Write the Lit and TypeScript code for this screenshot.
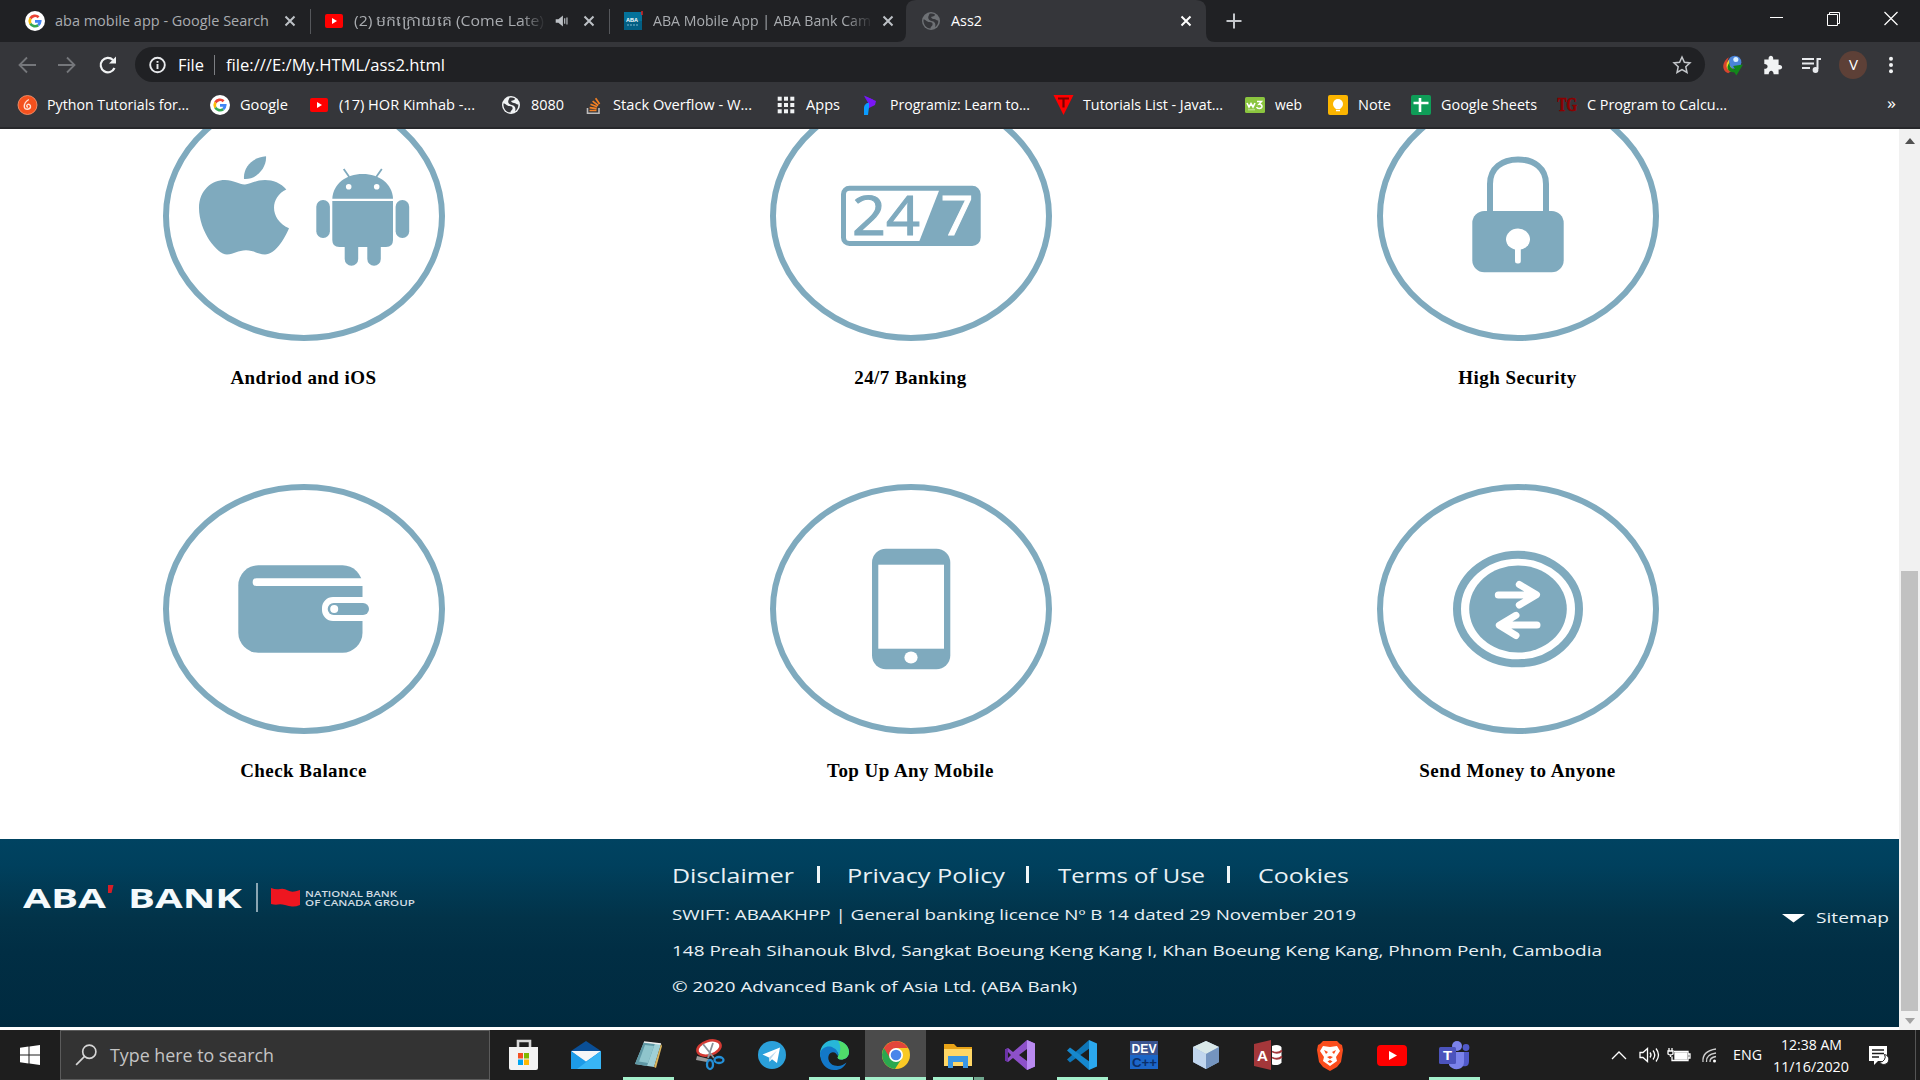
import { LitElement, html, svg, css } from "lit";
import { customElement } from "lit/decorators.js";

/* One line of text drawn at a known advance width. */
const fit = (text: string, width: number, size: number, cls = "", height = 24) => html`
  <svg class="fit ${cls}" width=${width} height=${height} viewBox="0 0 ${width} ${height}">
    <text x="0" y=${height / 2 + size * 0.36} font-size=${size} textLength=${width} lengthAdjust="spacingAndGlyphs">${text}</text>
  </svg>`;

const icon = (body: unknown, w = 20, h = w, box = "0 0 20 20") => html`
  <svg class="icon" width=${w} height=${h} viewBox=${box}>${body}</svg>`;

const googleG = svg`
  <circle cx="10" cy="10" r="10" fill="#fff"/>
  <g fill="none" stroke-width="2.700">
    <path d="M13.600 6.200A5.200 5.200 0 0 0 5.400 7.500" stroke="#ea4335"/>
    <path d="M5.400 7.500A5.400 5.400 0 0 0 5.400 12.600" stroke="#fbbc05"/>
    <path d="M5.400 12.600A5.200 5.200 0 0 0 13.200 14.100" stroke="#34a853"/>
    <path d="M13.200 14.100A5 5 0 0 0 15.200 10.300H10" stroke="#4285f4"/>
  </g>`;
const tube = svg`<rect x="1" y="3" width="18" height="14" rx="2" fill="#f00"/><path d="M8 7l5 3-5 3z" fill="#fff"/>`;
const globe = (c: string, land: string) => svg`
  <circle cx="10" cy="10" r="9" fill=${c}/>
  <path d="M2.500 8.500c2.500 0 3 2.500 6 2.500 2.500 0 3.500 1.300 3 3C11 15.500 9.500 15.500 9.500 17.500 5 17.500 2 13 2.500 8.500zM8.500 2.800c1.500-.6 4-.4 5.500.7 0 1.500-1.500 2-3.500 2.300C9.500 6.300 11 8 13 8c2 0 2.500 2 4.300 1.500.2 3-1.300 5.500-3.300 6.800 1-2.500.3-5.300-2.500-6C9 9.700 7 8.500 7.200 6.500 7.300 5 8 4.500 8.500 2.800z" fill=${land}/>`;
const cross = (c: string) => svg`<path d="M5.500 5.500l9 9M14.500 5.500l-9 9" stroke=${c} stroke-width="2"/>`;

const bookmarks = [
  { at: 17, text: "Python Tutorials for...", w: 142, art: svg`<circle cx="10.500" cy="10" r="9.500" fill="#f4511e" stroke="#ff9a72" stroke-width=".8"/><path d="M11.800 4.500C8.500 6.500 7 9 7.300 12c.5 3 5.500 3 6.200 0 .3-2.300-1.800-3.300-3.200-2.300-1.200 1-.5 2.600.8 2.300" fill="none" stroke="#ffe2d5" stroke-width="1.400"/>` },
  { at: 210, text: "Google", w: 48, art: googleG },
  { at: 309, text: "(17) HOR Kimhab -...", w: 136, art: tube },
  { at: 501, text: "8080", w: 33, art: globe("#f1f3f4", "#35363a") },
  { at: 583, text: "Stack Overflow - W...", w: 139, art: svg`<path d="M4.500 13v5.200h11.500v-5.200" fill="none" stroke="#bcbbbb" stroke-width="1.600"/><g stroke="#f48024" stroke-width="1.700"><path d="M6.500 15.500h7M6.600 12.600l7 1M7.500 9.300l6.600 2.500M9.600 6.200l5.600 4.300M12.600 3.200l4 5.800"/></g>` },
  { at: 776, text: "Apps", w: 34, art: svg`<g fill="#f1f3f4">${[0, 1, 2].map(r => [0, 1, 2].map(c => svg`<rect x=${1.7 + c * 6.3} y=${1.7 + r * 6.3} width="4" height="4"/>`))}</g>` },
  { at: 860, text: "Programiz: Learn to...", w: 140, art: svg`<path d="M4 1l9 3.500-4.500 4z" fill="#6a1cf0"/><path d="M4 .5L16 6l-1 4-9 4.500V9l4-2.500z" fill="#7b16f5"/><path d="M4 13c0-3 2-5 5-5v4l-1 8H4z" fill="#0a9cff"/>` },
  { at: 1053, text: "Tutorials List - Javat...", w: 140, art: svg`<path d="M.5 0h20l-10 20z" fill="#f00"/><path d="M5 3.500h11M10.500 3.500v9" stroke="#7b0000" stroke-width="2.200"/>` },
  { at: 1245, text: "web", w: 27, art: svg`<rect y="2" width="20" height="16" rx="1.500" fill="#8bc53f"/><path d="M2 8l2 4 2-3.500 2 3.500 2-4" fill="none" stroke="#fff" stroke-width="1.600"/><path d="M12 6.500h4.500L14 9.300c4-.5 4 4.500 0 4.200-1.300 0-2-.6-2.400-1.500" fill="none" stroke="#fff" stroke-width="1.500"/><path d="M3 14.800h7" stroke="#d7efb8" stroke-width=".8"/>` },
  { at: 1328, text: "Note", w: 33, art: svg`<rect width="20" height="20" rx="2" fill="#fbb500"/><circle cx="10" cy="9" r="5" fill="#fff"/><path d="M7.500 12h5v2h-5zM8 14.800h4v1.400H8z" fill="#fff"/>` },
  { at: 1411, text: "Google Sheets", w: 96, art: svg`<rect width="20" height="20" rx="2" fill="#0f9d58"/><path d="M9 3v14M2.500 8h15" stroke="#fff" stroke-width="2.600"/>` },
  { at: 1557, text: "C Program to Calcu...", w: 140, art: svg`<text class="tg" x="0.500" y="16.300" font-size="18" textLength="19.500" lengthAdjust="spacingAndGlyphs">TG</text>` },
];

const ring = (body: unknown) => html`
  <svg class="ring" width="282" height="250" viewBox="0 0 282 250">
    <ellipse cx="141" cy="125" rx="138" ry="122" fill="none" stroke="#7faabe" stroke-width="6"/>
    <g fill="#7faabe">${body}</g>
  </svg>`;

const features = [
  { label: "Andriod and iOS", art: svg`
    <path d="M81 88C80 76 90 66 103 65.300C104 76 94 89 81 88z"/>
    <path d="M82 93.500C87 93 93 89 102 89C110 89 118 92 123.300 98.500C107 106 106 128 126 137.300C121 149 112 163.500 102 163.500C95 163.500 91 159.300 83 159.300C75 159.300 71 163.500 64 163.500C54 163.500 36 140 36 117C36 99 49 89 62 89C71 89 77 94 82 93.500z"/>
    <path d="M169.300 107.700C170 93 183 83 199.700 83S229.500 93 230 107.700z"/>
    <path d="M180.700 78l5.600 8M218.800 78l-5.600 8" stroke="#7faabe" stroke-width="1.800"/>
    <circle cx="185.700" cy="95.700" r="2.800" fill="#fff"/><circle cx="213.700" cy="95.700" r="2.800" fill="#fff"/>
    <path d="M169.300 110H230V149q0 7-7 7H176.300q-7 0-7-7z"/>
    <rect x="153.300" y="109" width="13.600" height="38" rx="6.700"/><rect x="232.600" y="109" width="13.600" height="38" rx="6.700"/>
    <path d="M181.700 150h13.500v18a6.750 6.700 0 0 1-13.500 0zM204.300 150h13.500v18a6.750 6.700 0 0 1-13.500 0z"/>` },
  { label: "24/7 Banking", art: svg`
    <rect x="73.500" y="97.200" width="134.700" height="55.300" rx="6" fill="none" stroke="#7faabe" stroke-width="5"/>
    <path d="M169.300 99H208v52h-59z"/>
    <text class="digits" x="82" y="144" font-size="54" textLength="68" lengthAdjust="spacingAndGlyphs">24</text>
    <text class="digits light" x="170.500" y="144" font-size="54" textLength="33" lengthAdjust="spacingAndGlyphs">7</text>` },
  { label: "High Security", art: svg`
    <path d="M113 122V93C113 77 125 68.500 141 68.500S169 77 169 93V122" fill="none" stroke="#7faabe" stroke-width="6"/>
    <rect x="95.300" y="120" width="91.400" height="61.300" rx="12"/>
    <ellipse cx="141" cy="148.300" rx="12" ry="10.700" fill="#fff"/><rect x="138" y="150" width="5.800" height="22.500" rx="2.500" fill="#fff"/>` },
  { label: "Check Balance", art: svg`
    <rect x="75.300" y="81.300" width="124.200" height="87.400" rx="20"/>
    <path d="M202 94.300H93.500a3.800 3.800 0 0 0 0 7.700H202zM202 113H170a11 11 0 0 0-11 11v2a11 11 0 0 0 11 11H202z" fill="#fff"/>
    <rect x="164.700" y="119" width="41.300" height="12" rx="6"/><circle cx="171.200" cy="125" r="4" fill="#fff"/>` },
  { label: "Top Up Any Mobile", art: svg`
    <rect x="102" y="64.700" width="78.300" height="120.600" rx="14"/>
    <rect x="108.300" y="80.700" width="65.700" height="84" fill="#fff"/><ellipse cx="141" cy="173.500" rx="6.600" ry="5.900" fill="#fff"/>` },
  { label: "Send Money to Anyone", art: svg`
    <ellipse cx="141" cy="125" rx="61" ry="54.300" fill="none" stroke="#7faabe" stroke-width="8"/>
    <ellipse cx="141" cy="125" rx="48.800" ry="43.500"/>
    <path d="M121.300 111H158M142.300 100.500L159.500 110.800L142.300 121M160 141H124M139 131.300L122.300 141.200L139 151.500" fill="none" stroke="#fff" stroke-width="7" stroke-linecap="round" stroke-linejoin="round"/>` },
];

const tasks = [
  { state: "", art: svg`<path d="M10 9V2h12v7" fill="none" stroke="#d8d8d8" stroke-width="2.600"/><path d="M1 8h29v21a2 2 0 0 1-2 2H3a2 2 0 0 1-2-2z" fill="#f3f3f3"/><path d="M10 14h5v5.500h-5z" fill="#f25022"/><path d="M16 14h5v5.500h-5z" fill="#7fba00"/><path d="M10 20.500h5V26h-5z" fill="#00a4ef"/><path d="M16 20.500h5V26h-5z" fill="#ffb900"/>` },
  { state: "", art: svg`<path d="M1 12L16 2l15 10v5H1z" fill="#0a4f97"/><path d="M1 12h30L16 24z" fill="#f4f6f8"/><path d="M1 12l15 10.500L31 12v18H1z" fill="#1d9be8"/><path d="M31 12v18H7z" fill="#38b5f5"/>` },
  { state: "run", art: svg`<path d="M12 3l17 2-7 23-19-3z" fill="#9fd0d6"/><path d="M12 3l11 1.300L15 27 3 25z" fill="#5f98a5"/><path d="M13 6l9 1-6 17-9-1.500z" fill="#8fc5cc"/><path d="M29 5l1 2-6 22-2-1z" fill="#dab45b"/><path d="M12 3l17 2" stroke="#eee" stroke-width="1.500"/>` },
  { state: "", art: svg`<ellipse cx="15" cy="9" rx="12" ry="7" fill="#fff" stroke="#d43a33" stroke-width="2.500" transform="rotate(-18 15 9)"/><path d="M3 17l12 3-2 3-11-2z" fill="#999"/><path d="M9 5l11 14M19 4l-5 15" stroke="#8b9299" stroke-width="1.800"/><g fill="none" stroke="#2490d8" stroke-width="2.300"><ellipse cx="16" cy="25.500" rx="3" ry="4.500"/><ellipse cx="25" cy="21" rx="4.500" ry="3"/></g>` },
  { state: "", art: svg`<circle cx="16" cy="16" r="14" fill="#2ba0da"/><path d="M6.500 15.500L24 8.500l-3 15.500-5-3.700-2.500 2.500-.5-4.200z" fill="#fff"/><path d="M13 18.600l8-7-6 8-1.500 3.200z" fill="#b8d9ee"/>` },
  { state: "run", art: svg`<path d="M2 15C2 7 8 1 16 1c9 0 15 6 15 12 0 5-4 7.500-8 7.500-3 0-4-1.500-3-3 1-2 0-5.500-4.500-5.500C9 12 6 17 7 22 3.500 20 2 18 2 15z" fill="#27b7d8"/><path d="M20 1.700C27 3 31 8 31 13c0 5-4 7.500-8 7.500-3 0-4-1.500-3-3 2-3 4-10 0-15.800z" fill="#4fdc6a"/><path d="M2 14c2-6 9-8 13.500-5C20 11 20.500 15 19.500 17c-1-3-4-5-7-3-4 3-2.500 11 4 12.500 5 1.300 9-.5 12-3C26 29 21 31.500 16 31 8 31 2 24 2 14z" fill="#1378c8"/>` },
  { state: "active", art: svg`<circle cx="16" cy="16" r="14" fill="#f9c925"/><path d="M16 16L3.900 9A14 14 0 0 0 15 30l7-11z" fill="#2aa84f"/><path d="M3.900 9A14 14 0 0 1 28.100 9H16l-6 10z" fill="#e3453a"/><circle cx="16" cy="16" r="7" fill="#fff"/><circle cx="16" cy="16" r="5.300" fill="#4a86ea"/>` },
  { state: "run pair", art: svg`<path d="M2 5h10l3 3h15v18H2z" fill="#e8a317"/><path d="M2 10h28v17H2z" fill="#ffd766"/><path d="M6 17h20v12h-5v-6H11v6H6z" fill="#3a97e4"/>` },
  { state: "", art: svg`<path d="M23 1l8 3.500v23L23 31 9 19l-5 4-3-1.500v-11L4 9l5 4zM4 13v6l3-3zM23 10l-8 6 8 6z" fill="#8d50c9" fill-rule="evenodd"/><path d="M23 1l8 3.500v23L23 31z" fill="#b98af0"/><path d="M4 9L1 10.500v11L4 23z" fill="#6a32a5"/>` },
  { state: "run", art: svg`<path d="M23 1L1 20.500 4 23.500 24 9z" fill="#0e76b8"/><path d="M4 8.500L1 11.500 23 31l1-8z" fill="#1688ce"/><path d="M23 1l8 3.500v23L23 31z" fill="#2ba8ee"/>` },
  { state: "", art: svg`<rect x="2" y="2" width="28" height="28" fill="#12408f"/><rect x="2" y="2" width="28" height="14" fill="#3a5390"/><rect x="2" y="16" width="28" height="14" fill="#1c66c8"/><text class="dev" x="3.500" y="14" font-size="12.500" textLength="25" lengthAdjust="spacingAndGlyphs">DEV</text><text class="dev dark" x="4" y="27.500" font-size="13.500" textLength="25" lengthAdjust="spacingAndGlyphs">C++</text>` },
  { state: "", art: svg`<path d="M16 2l13 6v15L16 30 3 23V8z" fill="#9db9d9"/><path d="M16 2l13 6-13 7L3 8z" fill="#d9e8e9"/><path d="M3 8l13 7v15L3 23z" fill="#c1d6ee"/><path d="M29 8l-13 7v15l13-7z" fill="#7494bf"/>` },
  { state: "", art: svg`<path d="M2 5l17-4v30L2 27z" fill="#a4373a"/><text class="dev" x="5" y="21.500" font-size="15" textLength="11" lengthAdjust="spacingAndGlyphs">A</text><path d="M20 7c4-2 9-1 9.500 1.500v15c-2 3-6.500 3-9.500 2z" fill="#fff"/><path d="M20 12.500c4 2 8 1 10-1M20 18.500c4 2 8 1 10-1" fill="none" stroke="#a4373a" stroke-width="1.800"/>` },
  { state: "", art: svg`<path d="M9 2h14l3 3 2 1 1 5-2 12-4 5-7 4-7-4-4-5L3 11l1-5 2-1z" fill="#fb4d1d"/><path d="M9 7l7 1 7-1 3 5-4 6 1 4-7 5-7-5 1-4-4-6z" fill="#fff"/><path d="M10 11l4 2-2 2zM22 11l-4 2 2 2zM13 18l3-1 3 1-3 2zM13.500 22.500l2.500-1.500 2.500 1.500-2.500 1.800z" fill="#fb4d1d"/>` },
  { state: "", art: svg`<rect x="1" y="6" width="30" height="21" rx="4" fill="#f00"/><path d="M13 12l8 4.500-8 4.500z" fill="#fff"/>` },
  { state: "run", art: svg`<circle cx="19" cy="7" r="5" fill="#7b83eb"/><circle cx="28" cy="8.500" r="3.400" fill="#5059c9"/><path d="M24 13h7v9c0 5-3 6-7 5z" fill="#5059c9"/><path d="M11 13h15v10c0 9-12 9-15 3z" fill="#7b83eb"/><rect x="1" y="8" width="17" height="17" rx="1.500" fill="#4b53bc"/><text class="dev" x="5" y="21" font-size="13" textLength="9" lengthAdjust="spacingAndGlyphs">T</text>` },
];

@customElement("app-root")
export class AppRoot extends LitElement {
  static styles = css`
    :host { display: block; width: 1920px; height: 1080px; overflow: hidden; font-family: "Open Sans", "Noto Sans", sans-serif; }
    .screen { display: flex; flex-direction: column; width: 1920px; height: 1080px; background: #fff; }
    svg { display: block; flex: none; }
    .icon { overflow: visible; }
    .fit { overflow: visible; fill: #fff; }
    .muted { fill: #a9acb0; }
    .tabs { display: flex; height: 42px; background: #202124; align-items: center; }
    .tab { display: flex; align-items: center; height: 42px; box-sizing: border-box; }
    .tab .icon:first-child { margin-right: 10px; }
    .t1 { width: 310px; padding-left: 25px; }
    .t2 { width: 298px; padding-left: 13px; }
    .t3 { width: 295px; padding-left: 13px; }
    .t1 .close { margin-left: 11px; }
    .t2 .sound { width: 18px; margin-left: 9px; }
    .t2 .sound .icon { margin-right: 0; }
    .t2 .close { margin-left: 8px; }
    .t3 .close { margin-left: 7px; }
    .faded { -webkit-mask-image: linear-gradient(90deg, #000 88%, transparent 101%); mask-image: linear-gradient(90deg, #000 88%, transparent 101%); }
    .rule { width: 1px; height: 25px; background: #55575b; flex: none; }
    .current { width: 318px; box-sizing: border-box; padding-left: 24px; margin-left: -8px; height: 42px; display: flex; align-items: center; position: relative; flex: none; }
    .shape { position: absolute; left: 0; top: 0; }
    .current > :not(.shape) { position: relative; }
    .current .title { margin-left: 10px; }
    .current .close { margin-left: 194px; }
    .plus { margin-left: 9px; }
    .controls { display: flex; margin-left: auto; gap: 37px; padding-right: 19px; margin-top: -6px; }
    .toolbar { display: flex; align-items: center; height: 45px; background: #35363a; padding-left: 17px; box-sizing: border-box; }
    .toolbar .nav { margin-right: 20px; }
    .omni { display: flex; align-items: center; width: 1570px; height: 35px; margin-left: -2px; border-radius: 18px; background: #202124; box-sizing: border-box; padding: 0 13px 0 12px; flex: none; }
    .omni .fit:nth-of-type(2) { margin-left: 11px; }
    .omni .rule { height: 20px; margin: 0 11px 0 10px; background: #7d7f83; }
    .star { margin-left: auto; }
    .tools { display: flex; align-items: center; gap: 18px; margin-left: 16px; }
    .avatar { width: 28px; height: 28px; border-radius: 50%; background: #5d4037; display: flex; align-items: center; justify-content: center; margin: 0 -4px 0 0; }
    .marks { display: flex; padding-left: 17px; box-sizing: border-box; background: #35363a; align-items: center; border-bottom: 2px solid #27282b; height: 42px; }
    .mark { display: flex; align-items: center; gap: 10px; flex: none; margin-top: -4px; }
    .tg { font-family: "Liberation Serif", serif; font-weight: 700; fill: #8b0000; stroke: #8b0000; stroke-width: 0.7px; }
    .more { margin: -9px 0 0 1px; }
    .view { display: flex; height: 901px; overflow: hidden; background: #fff; }
    .page { display: flex; flex-direction: column; width: 1899px; height: 898px; }
    .features { height: 710px; overflow: hidden; flex: none; }
    .grid { display: grid; grid-template-columns: repeat(3, 607px); grid-auto-rows: 393px; margin-top: -38px; }
    .feature { display: flex; flex-direction: column; align-items: center; }
    .feature h2 { margin: 25px 0 0; font: 700 19px/24px "Liberation Serif", "Times New Roman", serif; letter-spacing: 0.45px; color: #000; }
    .digits { font-family: "Open Sans", sans-serif; stroke: #7faabe; stroke-width: 1px; }
    .light { fill: #fff; stroke: #fff; }
    .footer { display: flex; height: 188px; background: linear-gradient(180deg, #004361 0%, #00405d 14%, #023349 42%, #012e44 60%, #002a3f 100%); }
    .brand { width: 672px; padding: 42px 0 0 23px; box-sizing: border-box; }
    .brand text { fill: #f5fafc; font-family: "Open Sans", sans-serif; font-weight: 700; }
    .brand .sub { fill: #cfdbe2; font-weight: 600; }
    .legal { width: 1110px; padding-top: 23px; display: flex; flex-direction: column; }
    .legal .fit, .sitemap .fit { fill: #e9f1f5; font-weight: 500; }
    .links { display: flex; align-items: center; height: 28px; margin-bottom: 13px; }
    .links .bar { width: 3px; height: 17px; margin-top: -3px; background: #f0f6f8; }
    .b1 { margin: 0 27px 0 23px; } .b2 { margin: 0 29px 0 21px; } .b3 { margin: 0 28px 0 22px; }
    .line { height: 24px; margin-bottom: 12px; }
    .sitemap { display: flex; gap: 11px; padding-top: 67px; height: 24px; align-items: center; }
    .scroll { display: flex; flex-direction: column; width: 21px; height: 901px; background: #f1f1f1; align-items: center; }
    .thumb { width: 17px; height: 440px; margin: 426px 0 6px; background: #c1c1c1; flex: none; }
    .up { margin-top: 8px; }
    .taskbar { display: flex; height: 50px; background: #1e1e1e; align-items: stretch; }
    .start { width: 60px; display: flex; align-items: center; justify-content: center; }
    .search { display: flex; align-items: center; gap: 13px; width: 430px; box-sizing: border-box; border: 1px solid #5b5b5b; background: #333; padding-left: 14px; }
    .search .fit { fill: #c4c4c4; margin-top: 2px; }
    .apps { display: flex; padding-left: 3px; gap: 1px; }
    .app { display: flex; width: 61px; justify-content: center; align-items: center; box-sizing: border-box; background-repeat: no-repeat; }
    .run { background-image: linear-gradient(#a4efcb, #a4efcb); background-size: 51px 3px; background-position: 6px 100%; }
    .active { background-color: #4b4b4b; background-image: linear-gradient(#a4efcb, #a4efcb); background-size: 61px 3px; background-position: 0 100%; }
    .pair { background-image: linear-gradient(90deg, #a4efcb 40px, #1e1e1e 40px, #1e1e1e 41px, #70a78e 41px); }
    .dev { font-family: "Liberation Sans", sans-serif; font-weight: 700; fill: #fff; }
    .dark { fill: #0b2e69; }
    .tray { display: flex; align-items: center; margin-left: auto; padding-right: 4px; }
    .clock { display: flex; flex-direction: column; align-items: center; width: 76px; margin: 0 19px 0 11px; padding-top: 1px; }
    .edge { width: 1px; height: 50px; background: #555; margin-left: 25px; }
  `;

  private tabs() {
    return html`
      <div class="tabs">
        <div class="tab t1">${icon(googleG)}${fit("aba mobile app - Google Search", 214, 14.5, "muted")}<span class="close">${icon(cross("#bdc1c6"))}</span></div>
        <i class="rule"></i>
        <div class="tab t2">${icon(tube)}<span class="faded">${fit("(2) មកក្រោយគេ (Come Late)", 190, 14.5, "muted")}</span>
          <span class="sound">${icon(svg`<path d="M3 8h3l5-4v12l-5-4H3z" fill="#bdc1c6"/><path d="M13 7v6M15.500 6v8" stroke="#bdc1c6" stroke-width="1.300"/>`, 18)}</span>
          <span class="close">${icon(cross("#bdc1c6"))}</span></div>
        <i class="rule"></i>
        <div class="tab t3">${icon(svg`<rect x="1" y="1" width="18" height="18" fill="#04729a"/><rect x="1" y="10" width="18" height="9" fill="#035f84"/><text class="dev" x="3" y="11" font-size="5.500" textLength="12" lengthAdjust="spacingAndGlyphs">ABA</text><path d="M4 14h11" stroke="#7fb6cc" stroke-dasharray="2 1"/><path d="M19 0v4" stroke="#d22" stroke-width="1.500"/>`)}<span class="faded">${fit("ABA Mobile App | ABA Bank Cam", 218, 14.5, "muted")}</span><span class="close">${icon(cross("#bdc1c6"))}</span></div>
        <div class="current">
          <svg class="shape" width="318" height="42" viewBox="0 0 318 42"><path d="M0 42Q9 42 9 33V10Q9 0 19 0H299Q309 0 309 10V33Q309 42 318 42z" fill="#35363a"/></svg>
          ${icon(globe("#6e7175", "#35363a"))}<span class="title">${fit("Ass2", 31, 14.5)}</span><span class="close">${icon(cross("#fff"))}</span>
        </div>
        <span class="plus">${icon(svg`<path d="M10 2.500v15M2.500 10h15" stroke="#c4c7cb" stroke-width="2"/>`)}</span>
        <div class="controls">
          ${icon(svg`<path d="M3 9.500h13" stroke="#fff"/>`)}
          ${icon(svg`<path d="M3.500 6.500h10v11h-10zM5.500 6.500v-2h10v11h-2" fill="none" stroke="#fff"/>`)}
          ${icon(svg`<path d="M3.500 4l13 13M16.500 4l-13 13" stroke="#fff" stroke-width="1.200"/>`)}
        </div>
      </div>`;
  }

  private toolbar() {
    return html`
      <div class="toolbar">
        <span class="nav">${icon(svg`<path d="M19 10H3M10 2.500L2.500 10l7.500 7.500" fill="none" stroke="#75777b" stroke-width="1.800"/>`)}</span>
        <span class="nav">${icon(svg`<path d="M1 10h16M10 2.500l7.500 7.500-7.500 7.500" fill="none" stroke="#75777b" stroke-width="1.800"/>`)}</span>
        <span class="nav">${icon(svg`<path d="M17.500 13A7.200 7.200 0 1 1 16 5" fill="none" stroke="#f1f3f4" stroke-width="2.200"/><path d="M19 1.500v7h-7z" fill="#f1f3f4"/>`)}</span>
        <div class="omni">
          ${icon(svg`<circle cx="10.500" cy="10" r="7.300" fill="none" stroke="#e8eaed" stroke-width="1.900"/><path d="M10.500 9v5M10.500 6v1.800" stroke="#e8eaed" stroke-width="1.900"/>`)}
          ${fit("File", 26, 16)}<i class="rule"></i>${fit("file:///E:/My.HTML/ass2.html", 219, 16)}
          <span class="star">${icon(svg`<path d="M10 2l2.400 5.300 5.600.6-4.200 3.900 1.200 5.700L10 14.600 5 17.500l1.200-5.700L2 7.900l5.600-.6z" fill="none" stroke="#c4c7cb" stroke-width="1.500"/>`)}</span>
        </div>
        <div class="tools">
          ${icon(svg`<circle cx="12.500" cy="7.500" r="6" fill="#4a83d8"/><circle cx="13.500" cy="5" r="2.300" fill="#d8efff"/><path d="M7 3C1 7 0 15 6.500 17.500l3-2C5 13 5 8 7 3z" fill="#d9442e"/><path d="M7.500 5c-4 4-3 10 2 11l2-2C8 12 7 9 7.500 5z" fill="#f2cf2f"/><path d="M8 7.500c-1 4 2 6.500 5 6.500l-2-3 9-1.500-6 10-2-3C7 17 3.500 13 8 7.500z" fill="#12871a"/>`, 22)}
          ${icon(svg`<path d="M3 5h4c-1-4.500 5-4.500 4 0h5v5c4.300-1 4.300 5 0 4v4.500h-4.500c0-4.500-4.500-4.500-4.500 0H3V13.500c4 0 4-4.500 0-4.500z" fill="#f1f3f4"/>`, 22)}
          ${icon(svg`<path d="M1 4h12M1 8.500h12M1 13h8M16.500 14V4h3.500" fill="none" stroke="#e8eaed" stroke-width="2"/><circle cx="14.500" cy="15" r="2.900" fill="#e8eaed"/>`)}
          <div class="avatar">${fit("V", 9, 14)}</div>
          ${icon(svg`<g fill="#f1f3f4"><circle cx="10" cy="3.800" r="2"/><circle cx="10" cy="10" r="2"/><circle cx="10" cy="16.200" r="2"/></g>`)}
        </div>
      </div>`;
  }

  private marks() {
    return html`
      <div class="marks">
        ${bookmarks.map((b, i) => html`
          <div class="mark" style="width:${(bookmarks[i + 1]?.at ?? 1886) - b.at}px">${icon(b.art)}${fit(b.text, b.w, 14.5)}</div>`)}
        <span class="more">${fit("»", 9, 17)}</span>
      </div>`;
  }

  private footer() {
    return html`
      <div class="footer">
        <div class="brand">
          <svg width="400" height="34" viewBox="0 0 400 34">
            <text x="0" y="27" font-size="26" textLength="83" lengthAdjust="spacingAndGlyphs">ABA</text>
            <path d="M85 4h5.500l-2 8H85z" fill="#d81e27"/>
            <text x="105" y="27" font-size="26" textLength="114" lengthAdjust="spacingAndGlyphs">BANK</text>
            <path d="M234 2v29" stroke="#b9cbd4" stroke-width="1.500"/>
            <path d="M248 7q5 2 9 1t8 1.500 12-.5v15q-5 2-8 1.500t-7-1.500-7-.5q-3 .500-7-.5z" fill="#ee1620"/>
            <text class="sub" x="282" y="15.700" font-size="8.500" textLength="92" lengthAdjust="spacingAndGlyphs">NATIONAL BANK</text>
            <text class="sub" x="282" y="24.700" font-size="8.500" textLength="110" lengthAdjust="spacingAndGlyphs">OF CANADA GROUP</text>
          </svg>
        </div>
        <div class="legal">
          <div class="links">
            ${fit("Disclaimer", 122, 19.5)}<i class="bar b1"></i>${fit("Privacy Policy", 158, 19.5)}<i class="bar b2"></i>${fit("Terms of Use", 147, 19.5)}<i class="bar b3"></i>${fit("Cookies", 91, 19.5)}
          </div>
          <div class="line">${fit("SWIFT: ABAAKHPP | General banking licence Nº B 14 dated 29 November 2019", 684, 14.5)}</div>
          <div class="line">${fit("148 Preah Sihanouk Blvd, Sangkat Boeung Keng Kang I, Khan Boeung Keng Kang, Phnom Penh, Cambodia", 930, 14.5)}</div>
          <div class="line">${fit("© 2020 Advanced Bank of Asia Ltd. (ABA Bank)", 405, 14.5)}</div>
        </div>
        <div class="sitemap">
          <svg width="23" height="10" viewBox="0 0 23 10"><path d="M0 1h23L11.500 9.500z" fill="#fff"/></svg>${fit("Sitemap", 73, 14.5)}
        </div>
      </div>`;
  }

  private taskbar() {
    return html`
      <div class="taskbar">
        <div class="start">${icon(svg`<path d="M0 2.800l8.500-1.200v8H0zM9.500 1.500L20 0v9.600H9.500zM0 10.500h8.500v8L0 17.300zM9.500 10.500H20V20l-10.500-1.400z" fill="#fff"/>`)}</div>
        <div class="search">
          ${icon(svg`<circle cx="13" cy="7" r="6" fill="none" stroke="#d6d6d6" stroke-width="1.500"/><path d="M8.700 11.300L1 19" stroke="#d6d6d6" stroke-width="1.500"/>`, 22)}
          ${fit("Type here to search", 164, 18)}
        </div>
        <div class="apps">${tasks.map(t => html`<div class="app ${t.state}">${icon(t.art, 32, 32, "0 0 32 32")}</div>`)}</div>
        <div class="tray">
          <svg width="122" height="24" viewBox="0 0 122 24" fill="none" stroke="#fff" stroke-width="1.300">
            <path d="M1 16l7-7 7 7"/>
            <path d="M29 9.500h3l4.500-4v13l-4.500-4h-3zM39 9.500q2 2.500 0 5M42 7.500q3.500 4.500 0 9M45 5.500q5 6.500 0 13"/>
            <path d="M63 8.500h14v9H61v-4M77.500 11h1.500v4h-1.500"/><path d="M64 10h11.500v6H64z" fill="#fff"/><path d="M58 5v3M61 5v3M57 8h5v3q-2.500 2-5 0zM59.500 12v2"/>
            <path d="M92 19q-1-11 13-13M95.500 19q-1-7.500 9.500-9M99 19q-.5-4.500 6-5.500" stroke="#d0d0d0"/><circle cx="103.500" cy="18" r="1.500" fill="#fff" stroke="none"/>
          </svg>
          ${fit("ENG", 29, 14.5)}
          <div class="clock">${fit("12:38 AM", 61, 14.5, "", 22)}${fit("11/16/2020", 76, 14.5, "", 22)}</div>
          <svg width="22" height="22" viewBox="0 0 22 22"><path d="M1 2h18v15h-9l-4 4v-4H1z" fill="#fff"/><path d="M4 6h12M4 9.500h12M4 13h7" stroke="#1e1e1e" stroke-width="1.300"/><path d="M16.500 10.500a5 5 0 1 1-5 7.500 5 5 0 0 0 5-7.500z" fill="#fff" stroke="#1e1e1e"/></svg>
          <i class="edge"></i>
        </div>
      </div>`;
  }

  render() {
    return html`
      <div class="screen">
        ${this.tabs()}${this.toolbar()}${this.marks()}
        <div class="view">
          <div class="page">
            <div class="features"><div class="grid">
              ${features.map(f => html`<div class="feature">${ring(f.art)}<h2>${f.label}</h2></div>`)}
            </div></div>
            ${this.footer()}
          </div>
          <div class="scroll">
            <svg class="up" width="10" height="8" viewBox="0 0 10 8"><path d="M0 7L5 1l5 6z" fill="#505050"/></svg>
            <i class="thumb"></i>
            <svg width="10" height="8" viewBox="0 0 10 8"><path d="M0 1l5 6 5-6z" fill="#a3a3a3"/></svg>
          </div>
        </div>
        ${this.taskbar()}
      </div>`;
  }
}
